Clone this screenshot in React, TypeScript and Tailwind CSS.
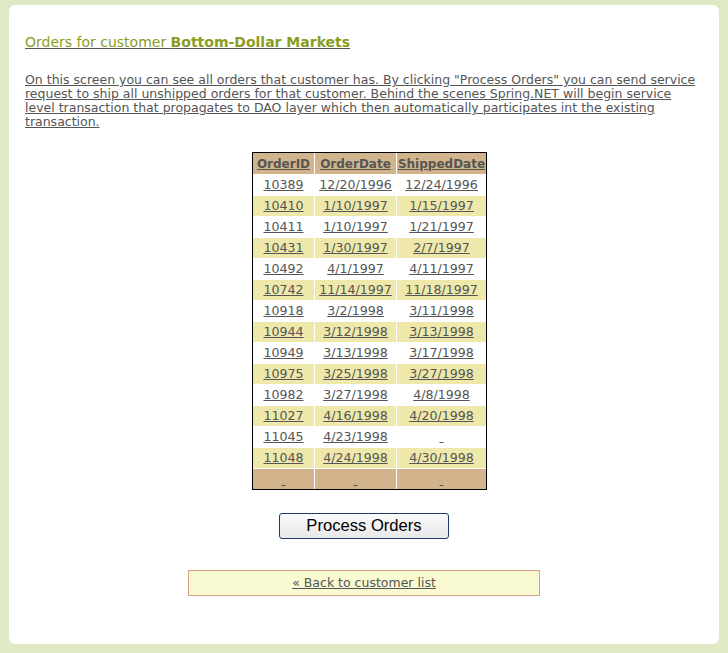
import React from "react";

const rows: [string, string, string][] = [
  ["10389", "12/20/1996", "12/24/1996"],
  ["10410", "1/10/1997", "1/15/1997"],
  ["10411", "1/10/1997", "1/21/1997"],
  ["10431", "1/30/1997", "2/7/1997"],
  ["10492", "4/1/1997", "4/11/1997"],
  ["10742", "11/14/1997", "11/18/1997"],
  ["10918", "3/2/1998", "3/11/1998"],
  ["10944", "3/12/1998", "3/13/1998"],
  ["10949", "3/13/1998", "3/17/1998"],
  ["10975", "3/25/1998", "3/27/1998"],
  ["10982", "3/27/1998", "4/8/1998"],
  ["11027", "4/16/1998", "4/20/1998"],
  ["11045", "4/23/1998", ""],
  ["11048", "4/24/1998", "4/30/1998"],
];

function Cell({ v, first }: { v: string; first?: boolean }) {
  return (
    <td
      className={
        "h-[21px] p-0 text-center align-middle text-[12.6px] border-t border-white " +
        (first ? "" : "border-l")
      }
    >
      <a href="#" className="underline text-[#555555]">
        {v === "" ? "\u00a0" : v}
      </a>
    </td>
  );
}

export default function App() {
  return (
    <div
      className="min-h-[653px] w-full bg-[#dfe9c3] pt-[5px] pl-[9px] pr-[9px] pb-[9px]"
      style={{ fontFamily: '"DejaVu Sans", Verdana, sans-serif' }}
    >
      <div className="w-[710px] h-[639px] bg-white rounded-[6px] pl-[16px] pr-[16px] pt-[29px]">
        <h1 className="text-[14px] leading-[17px] font-normal text-[#8b9c1e] underline decoration-[#555555]">
          Orders for customer <b className="font-bold">Bottom-Dollar Markets</b>
        </h1>
        <p className="mt-[22px] text-[12.5px] leading-[14px] text-[#555555] underline">
          On this screen you can see all orders that customer has. By clicking
          "Process Orders" you can send service request to ship all unshipped
          orders for that customer. Behind the scenes Spring.NET will begin
          service level transaction that propagates to DAO layer which then
          automatically participates int the existing transaction.
        </p>
        <div className="mt-[23px] flex justify-center pl-[11px]">
          <div className="border border-black">
            <table className="border-separate border-spacing-0 text-[12px] text-[#555555]">
              <colgroup>
                <col className="w-[61px]" />
                <col className="w-[82px]" />
                <col className="w-[90px]" />
              </colgroup>
              <thead>
                <tr className="bg-[#d2b48c]">
                  <th className="h-[21px] p-0 text-center font-bold">
                    <a href="#" className="underline text-[#555555]">OrderID</a>
                  </th>
                  <th className="h-[21px] p-0 text-center font-bold border-l border-white">
                    <a href="#" className="underline text-[#555555]">OrderDate</a>
                  </th>
                  <th className="h-[21px] p-0 text-center font-bold border-l border-white">
                    <a href="#" className="underline text-[#555555]">ShippedDate</a>
                  </th>
                </tr>
              </thead>
              <tbody>
                {rows.map((r, i) => (
                  <tr key={r[0]} className={i % 2 === 1 ? "bg-[#eee8aa]" : "bg-white"}>
                    <Cell v={r[0]} first />
                    <Cell v={r[1]} />
                    <Cell v={r[2]} />
                  </tr>
                ))}
                <tr className="bg-[#d2b48c]">
                  <td className="h-[21px] p-0 text-center align-bottom border-t border-white">
                    <a href="#" className="underline text-[#555555]">{"\u00a0"}</a>
                  </td>
                  <td className="h-[21px] p-0 text-center align-bottom border-t border-l border-white">
                    <a href="#" className="underline text-[#555555]">{"\u00a0"}</a>
                  </td>
                  <td className="h-[21px] p-0 text-center align-bottom border-t border-l border-white">
                    <a href="#" className="underline text-[#555555]">{"\u00a0"}</a>
                  </td>
                </tr>
              </tbody>
            </table>
          </div>
        </div>
        <div className="mt-[23px] flex justify-center">
          <button
            className="w-[170px] h-[26px] rounded-[3px] border border-[#1d3b6a] bg-gradient-to-b from-[#fbfbfb] to-[#e8e8e8] text-[16.6px] leading-[24px] text-black"
            style={{ fontFamily: '"Liberation Sans", Arial, sans-serif' }}
          >
            Process Orders
          </button>
        </div>
        <div className="mt-[31px] flex justify-center">
          <div className="w-[352px] h-[26px] border border-[#d4a383] bg-[#fafad2] flex items-center justify-center text-[12.5px]">
            <a href="#" className="underline text-[#555555]">« Back to customer list</a>
          </div>
        </div>
      </div>
    </div>
  );
}
